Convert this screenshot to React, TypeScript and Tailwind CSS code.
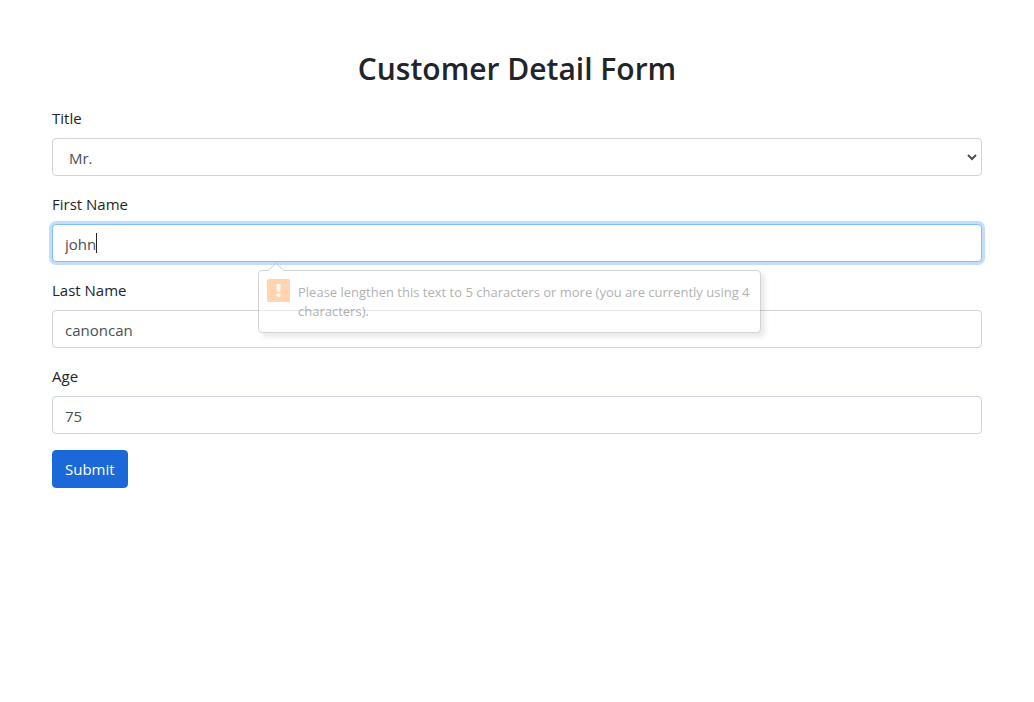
import { useState } from "react";
import type { ReactNode } from "react";

const control =
  "block h-[38px] w-full rounded-sm border border-[#ced4da] bg-white px-3 pt-0.5 text-[15px] text-[#495057] outline-none";

function Field({ id, label, children }: { id: string; label: string; children: ReactNode }) {
  return (
    <div className="mb-4">
      <label htmlFor={id} className="mb-2 block text-[15px] leading-6">
        {label}
      </label>
      <div className="relative">{children}</div>
    </div>
  );
}

function ValidationBubble() {
  return (
    <div
      role="alert"
      className="absolute top-[46px] left-[206px] z-10 flex h-[63px] w-[503px] gap-2 rounded-sm border border-[#a8a8a8] bg-white pt-2 pl-2 text-[13px] leading-[19px] text-[#666666] opacity-50 shadow-[4px_4px_4px_rgba(0,0,0,0.16)]"
    >
      <svg className="absolute -top-2 left-[9px] h-2 w-4 overflow-visible" viewBox="0 0 16 8" aria-hidden="true">
        <path d="M0 8.5 8 .5l8 8Z" fill="#fff" />
        <path d="M0 7.5 8 .5l8 7" fill="none" stroke="#a8a8a8" />
      </svg>
      <svg className="size-[23px] shrink-0" viewBox="0 0 23 23" aria-hidden="true">
        <rect width="23" height="23" rx="1.5" fill="#ffaa62" />
        <path d="M9.5 5h4l-.4 8H9.9Z" fill="#fff" />
        <circle cx="11.5" cy="16.3" r="2" fill="#fff" />
      </svg>
      <p className="pt-1 pr-1">
        Please lengthen this text to 5 characters or more (you are currently using 4 characters).
      </p>
    </div>
  );
}

export default function App() {
  const [firstName, setFirstName] = useState("john");
  return (
    <main className="min-h-screen bg-white px-[52px] pt-[50px] font-['Open_Sans','Noto_Sans',sans-serif] text-[#212529]">
      <h2 className="mb-[18px] text-center text-[30px] leading-[38px] font-semibold">Customer Detail Form</h2>
      <form onSubmit={(e) => e.preventDefault()}>
        <Field id="title" label="Title">
          <select id="title" className={`${control} appearance-none pl-4`} defaultValue="Mr.">
            <option>Mr.</option>
            <option>Mrs.</option>
            <option>Ms.</option>
          </select>
          <svg
            className="pointer-events-none absolute top-4 right-[5px] h-[7px] w-[10px]"
            viewBox="0 0 10 7"
            fill="none"
            stroke="#495057"
            strokeWidth="2"
            aria-hidden="true"
          >
            <path d="m1 1 4 4 4-4" />
          </svg>
        </Field>
        <Field id="first-name" label="First Name">
          <input
            id="first-name"
            type="text"
            minLength={5}
            value={firstName}
            onChange={(e) => setFirstName(e.target.value)}
            className="block h-[38px] w-full rounded-sm border border-[#80bdff] bg-white px-3 pt-0.5 text-[15px] text-[#495057] caret-transparent ring-3 ring-[#c6dcfd] outline-none"
          />
          <span className="absolute top-[9px] left-11 h-5 w-px bg-[#212529]" aria-hidden="true" />
          <ValidationBubble />
        </Field>
        <Field id="last-name" label="Last Name">
          <input id="last-name" type="text" defaultValue="canoncan" className={control} />
        </Field>
        <Field id="age" label="Age">
          <input id="age" type="text" inputMode="numeric" defaultValue="75" className={control} />
        </Field>
        <button
          type="submit"
          className="h-[38px] rounded-sm border border-[#1b69d8] bg-[#1b69d8] px-3 text-[15px] text-white"
        >
          Submit
        </button>
      </form>
    </main>
  );
}
